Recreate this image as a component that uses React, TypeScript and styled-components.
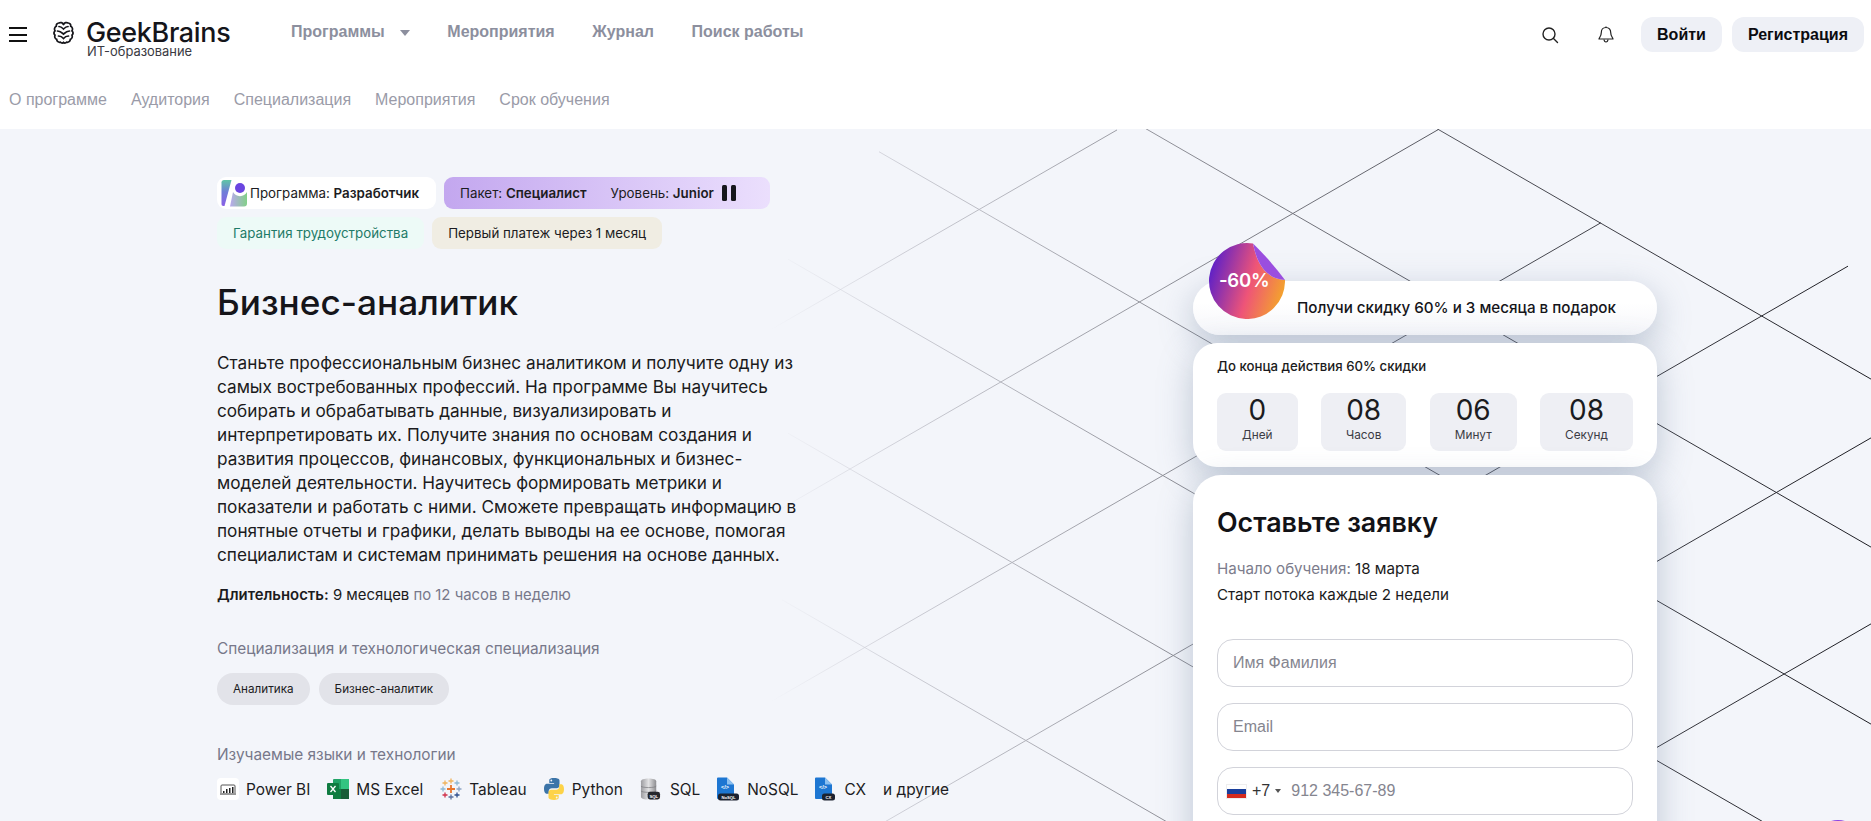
import React from "react";
import styled, { createGlobalStyle } from "styled-components";

const Global = createGlobalStyle`
  html, body { margin: 0; padding: 0; background: #fff; overflow: hidden; }
  * { box-sizing: border-box; }
  body { font-family: "Inter", "Noto Sans", sans-serif; color: #17171c; }
`;

const Page = styled.div`
  width: 100%;
  height: 821px;
  overflow: hidden;
  position: relative;
  display: flex;
  flex-direction: column;
`;

const TopBar = styled.header`
  flex: none;
  display: flex;
  align-items: flex-start;
  height: 66px;
  padding: 17px 7px 0 9px;
`;

const Burger = styled.div`
  width: 18px;
  margin-top: 10px;
  display: flex;
  flex-direction: column;
  gap: 4.5px;
  margin-right: 27px;
  span { display: block; height: 2px; background: #111; }
`;

const Brand = styled.div`
  display: flex;
  flex-direction: column;
  width: 237px;
  margin-top: 2px;
`;

const BrandRow = styled.div`
  display: flex;
  align-items: center;
  gap: 12px;
  height: 26px;
`;

const BrandName = styled.span`
  display: block;
  line-height: 22px;
  font-size: 26.9px;
  font-weight: 500;
  letter-spacing: -0.3px;
  color: #15151a;
`;

const BrandSub = styled.span`
  font-size: 12.9px;
  line-height: 16px;
  margin: -1px 0 0 33px;
  color: #3a3a42;
`;

const MainNav = styled.nav`
  display: flex;
  align-items: center;
  gap: 37.6px;
  height: 30px;
  font-family: "Liberation Sans", Arial, sans-serif;
  font-size: 16px;
  font-weight: 700;
  color: #8c8f9e;
`;

const NavItem = styled.span`
  display: flex;
  align-items: center;
  gap: 15px;
`;

const Caret = styled.i`
  width: 0;
  height: 0;
  border-left: 5px solid transparent;
  border-right: 5px solid transparent;
  border-top: 6px solid #8c8f9e;
  margin-top: 2px;
`;

const Actions = styled.div`
  margin-left: auto;
  display: flex;
  align-items: center;
  height: 35px;
`;

const IconSlot = styled.span`
  display: flex;
  width: 56px;
  padding-left: 5px;
  justify-content: center;
`;

const AuthButton = styled.button<{ $pad: number }>`
  height: 35px;
  border: 0;
  border-radius: 12px;
  background: #eef0f6;
  font-family: "Liberation Sans", Arial, sans-serif;
  font-weight: 700;
  font-size: 16px;
  color: #0c0c10;
  padding: 0 ${(p) => p.$pad}px;
  margin-left: 10px;
`;

const SubNav = styled.nav`
  flex: none;
  height: 63px;
  padding: 4px 0 0 9px;
  display: flex;
  align-items: center;
  gap: 24px;
  font-family: "Liberation Sans", Arial, sans-serif;
  font-size: 16px;
  color: #9a9ba8;
`;

const Hero = styled.main`
  flex: 1;
  min-height: 0;
  position: relative;
  background: #f3f5fa;
  display: flex;
  justify-content: space-between;
  padding: 0 214px 0 217px;
`;

const Lines = styled.svg`
  position: absolute;
  left: 0;
  top: 0;
`;

const LeftCol = styled.section`
  position: relative;
  width: 760px;
  padding-top: 48px;
`;

const ChipRow = styled.div`
  display: flex;
  gap: 8px;
  margin-bottom: 8px;
`;

const Chip = styled.div<{ $bg: string; $color?: string; $pad?: number }>`
  height: 32px;
  border-radius: 9px;
  background: ${(p) => p.$bg};
  color: ${(p) => p.$color || "#1c1c22"};
  display: flex;
  align-items: center;
  font-size: 13.35px;
  padding: 0 ${(p) => p.$pad ?? 16}px;
  b { font-weight: 600; }
`;

const ProgramChip = styled(Chip)`
  padding: 0 17px 0 4px;
  gap: 3px;
`;

const PackChip = styled(Chip)`
  gap: 24px;
  padding: 0 33px 0 16px;
`;

const LevelGroup = styled.span`
  display: flex;
  align-items: center;
  gap: 8px;
`;

const Title = styled.h1`
  font-size: 35.2px;
  line-height: 44px;
  font-weight: 500;
  margin: 31px 0 0;
  color: #15151a;
`;

const Lead = styled.p`
  font-size: 17.2px;
  line-height: 24px;
  margin: 27px 0 0;
  color: #1b1b20;
`;

const Duration = styled.p`
  font-size: 14.9px;
  line-height: 24px;
  margin: 16px 0 0;
  color: #1b1b20;
  b { font-weight: 600; }
  span { color: #77788a; }
`;

const Label = styled.h3<{ $top: number }>`
  font-size: 15.4px;
  line-height: 24px;
  font-weight: 400;
  color: #77788a;
  margin: ${(p) => p.$top}px 0 0;
`;

const Pills = styled.div`
  display: flex;
  gap: 9px;
  margin-top: 12px;
`;

const Pill = styled.span`
  height: 32px;
  border-radius: 16px;
  background: #e2e3e9;
  display: flex;
  align-items: center;
  padding: 0 16px;
  font-size: 11.7px;
  color: #1c1c22;
`;

const TechRow = styled.div`
  display: flex;
  align-items: center;
  gap: 17px;
  margin-top: 10px;
  height: 24px;
  white-space: nowrap;
`;

const Tech = styled.span<{ $gap?: number }>`
  display: flex;
  align-items: center;
  gap: ${(p) => p.$gap ?? 8}px;
  font-size: 15.4px;
  color: #1c1c22;
`;

const RightCol = styled.aside`
  position: relative;
  width: 464px;
  flex: none;
  padding-top: 152px;
  display: flex;
  flex-direction: column;
  gap: 8px;
`;

const PromoCard = styled.div`
  flex: none;
  position: relative;
  height: 54px;
  border-radius: 27px;
  background: linear-gradient(180deg, #fff 40%, #f5f6fa 100%);
  box-shadow: 0 10px 34px rgba(100, 120, 150, 0.38);
  display: flex;
  align-items: center;
  padding: 0 0 2px 104px;
  font-size: 15.2px;
  font-weight: 500;
  color: #15151a;
`;

const Sticker = styled.div`
  position: absolute;
  left: 16px;
  top: -38px;
  width: 76px;
  height: 76px;
`;

const StickerText = styled.span`
  position: absolute;
  left: 10px;
  top: 25px;
  color: #fff;
  font-size: 18.6px;
  line-height: 24px;
  font-weight: 600;
  letter-spacing: -0.3px;
`;

const TimerCard = styled.div`
  flex: none;
  position: relative;
  height: 124px;
  border-radius: 24px;
  background: #fff;
  box-shadow: 0 10px 34px rgba(100, 120, 150, 0.38);
  padding: 15px 24px 0;
`;

const TimerTitle = styled.div`
  font-size: 13.2px;
  line-height: 16px;
  font-weight: 500;
  color: #1b1b20;
`;

const TimerRow = styled.div`
  display: flex;
  justify-content: space-between;
  margin-top: 19px;
`;

const TimeBox = styled.div`
  height: 58px;
  padding: 1px 25px 0;
  border-radius: 9px;
  background: #eeeff4;
  display: flex;
  flex-direction: column;
  align-items: center;
`;

const TimeNum = styled.span`
  font-size: 28px;
  line-height: 32px;
  font-weight: 400;
  color: #1b1b20;
`;

const TimeLabel = styled.span`
  font-size: 11.8px;
  line-height: 16px;
  margin-top: 1px;
  color: #3b3b44;
`;

const FormCard = styled.form`
  flex: none;
  position: relative;
  height: 520px;
  border-radius: 28px;
  background: #fff;
  box-shadow: 0 10px 34px rgba(100, 120, 150, 0.38);
  padding: 29px 24px 0;
`;

const FormTitle = styled.h2`
  margin: 0;
  font-size: 26.8px;
  line-height: 36px;
  font-weight: 600;
  color: #121216;
`;

const FormInfo = styled.p`
  margin: 0;
  font-size: 15.15px;
  line-height: 26px;
  color: #1b1b20;
  span { color: #7c7c8c; }
`;

const InfoBlock = styled.div`
  margin-top: 16px;
  margin-bottom: 31px;
`;

const Field = styled.div`
  height: 48px;
  border: 1px solid #d2d3da;
  border-radius: 16px;
  background: #fff;
  margin-bottom: 16px;
  display: flex;
  align-items: center;
  padding: 0 0 0 8px;
`;

const FieldInput = styled.input<{ $pad?: number }>`
  flex: 1;
  min-width: 0;
  border: 0;
  outline: 0;
  background: transparent;
  padding-left: ${(p) => p.$pad ?? 7}px;
  font-family: "Liberation Sans", Arial, sans-serif;
  font-size: 16px;
  &::placeholder { color: #85858f; opacity: 1; }
`;

const Flag = styled.span`
  width: 21px;
  height: 15px;
  background: linear-gradient(#fff 0 33%, #1a3f9c 33% 66%, #d52b1e 66%);
  box-shadow: 0 0 0 1px #eee inset;
  flex: none;
`;

const DialCode = styled.span`
  font-family: "Liberation Sans", Arial, sans-serif;
  font-size: 16px;
  color: #333;
  margin-left: 5px;
`;

const DialCaret = styled.i`
  width: 0;
  height: 0;
  border-left: 3px solid transparent;
  border-right: 3px solid transparent;
  border-top: 4px solid #555;
  margin-left: 5px;
`;

const ChatBubble = styled.div`
  position: absolute;
  left: 1814px;
  top: 820px;
  width: 48px;
  height: 48px;
  border-radius: 50%;
  background: #8a3fe0;
`;

const S = 0.577;
const down = [
  { y: -210, a: 850 },
  { y: -42, a: 850 },
  { y: 135, a: 879 },
  { y: 295, a: 788 },
  { y: 469, a: 788 },
  { y: 639, a: 782 },
];
const up = [
  { y: 284, a: 770, b: 1117 },
  { y: 469, a: 770, b: 1439 },
  { y: 656, a: 770, b: 1601 },
  { y: 842, a: 770, b: 1848 },
  { y: 1027, a: 1100, b: 1871 },
  { y: 1213, a: 1300, b: 1871 },
];

const Pattern = () => (
  <Lines width="1871" height="692" viewBox="0 129 1871 692" fill="none">
    <defs>
      <linearGradient id="ln" gradientUnits="userSpaceOnUse" x1="770" y1="0" x2="1871" y2="0">
        <stop offset="0" stopColor="#d6d7df" stopOpacity="0" />
        <stop offset="0.12" stopColor="#cdced6" />
        <stop offset="0.38" stopColor="#8a8b93" />
        <stop offset="0.62" stopColor="#53545c" />
        <stop offset="1" stopColor="#1c1c22" />
      </linearGradient>
    </defs>
    {down.map((l) => (
      <path key={"d" + l.y} d={`M${l.a} ${l.y + (l.a - 850) * S}L1871 ${l.y + 1021 * S}`} stroke="url(#ln)" />
    ))}
    {up.map((l) => (
      <path key={"u" + l.y} d={`M${l.a} ${l.y - (l.a - 850) * S}L${l.b} ${l.y - (l.b - 850) * S}`} stroke="url(#ln)" />
    ))}
  </Lines>
);

const BrainLogo = () => (
  <svg width="21" height="23" viewBox="0 0 21 23" fill="none" stroke="#15151a" strokeWidth="1.7" strokeLinecap="round" style={{ marginLeft: -1 }}>
    <path d="M10.5 3.4C9.6 1.7 7.4 1 5.8 2 4 2.2 3 3.7 3.3 5.3 1.6 6.2 1 8.2 2 9.8c-1.2 1.3-1.2 3.2 0 4.4-.7 1.7.1 3.6 1.7 4.2.1 1.9 1.8 3.2 3.6 2.8 1 .9 2.3 1 3.2.3" />
    <path d="M10.5 3.4c.9-1.7 3.1-2.4 4.7-1.4 1.8.2 2.8 1.7 2.5 3.3 1.7.9 2.3 2.9 1.3 4.500 1.2 1.3 1.2 3.2 0 4.4.7 1.7-.1 3.6-1.7 4.2-.1 1.9-1.8 3.2-3.6 2.8-1 .9-2.3 1-3.2.3" />
    <path d="M6 5.5c2 0 3 1 4.500 2.500 1.500-1.500 2.500-2.500 4.500-2.500M4.500 10c2 0 3.500.8 6 3 2.500-2.200 4-3 6-3M5.500 15c2 0 3.500.6 5 2.500 1.500-1.900 3-2.500 5-2.500" />
  </svg>
);

const SearchIcon = () => (
  <svg width="18" height="18" viewBox="0 0 18 18" fill="none" stroke="#222" strokeWidth="1.4" strokeLinecap="round">
    <circle cx="8" cy="8" r="6" />
    <path d="M12.500 12.500L16.500 16.500" />
  </svg>
);

const BellIcon = () => (
  <svg width="16" height="18" viewBox="0 0 16 18" fill="none" stroke="#222" strokeWidth="1.2" strokeLinejoin="round">
    <path d="M8 1.500c-3 0-4.700 2.200-4.700 5 0 3.700-2 4.800-2.300 6.500h14c-.3-1.700-2.300-2.800-2.300-6.500 0-2.800-1.700-5-4.700-5z" />
    <path d="M6 13.500c.2 1.700 1 2.500 2 2.500s1.800-.8 2-2.500" />
    <path d="M8 .5v1" />
  </svg>
);

const ProgramLogo = () => (
  <svg width="26" height="28" viewBox="0 0 26 28">
    <defs>
      <linearGradient id="pl" x1="0" y1="0" x2="0" y2="1">
        <stop offset="0" stopColor="#5fc6a6" />
        <stop offset="0.45" stopColor="#6f7fd8" />
        <stop offset="1" stopColor="#8a5fe6" />
      </linearGradient>
      <linearGradient id="pr" x1="0" y1="0" x2="1" y2="0">
        <stop offset="0" stopColor="#b9a9ee" />
        <stop offset="1" stopColor="#82d088" />
      </linearGradient>
    </defs>
    <path d="M3 1h7.500L3.500 27H2.500C1 27 .5 26 .5 25V3.500C.5 2 1.500 1 3 1z" fill="url(#pl)" />
    <path d="M9 27.500L12 13A8 8 0 0 0 26 13V24.500a3 3 0 0 1-3 3z" fill="url(#pr)" />
    <circle cx="19" cy="9" r="5" fill="#6a45e0" />
  </svg>
);

const PauseIcon = () => (
  <svg width="15" height="16" viewBox="0 0 15 16" fill="#16161c">
    <rect x="0" width="5" height="16" rx="1.500" />
    <rect x="9" width="5" height="16" rx="1.500" />
  </svg>
);

const PowerBiIcon = () => (
  <svg width="22" height="22" viewBox="0 0 22 22">
    <rect width="22" height="22" rx="4" fill="#fff" />
    <path d="M4 15V8a1 1 0 0 1 1-1h12a1 1 0 0 1 1 1v7" fill="none" stroke="#555" strokeWidth="1" />
    <path d="M3 16h16" stroke="#333" strokeWidth="1" />
    <path d="M6 15v-2h1.500v2zM9 15v-4h1.500v4zM12 15v-5h1.500v5zM15 15V9h1.500v6z" fill="#222" />
  </svg>
);

const ExcelIcon = () => (
  <svg width="22" height="22" viewBox="0 0 22 22">
    <rect x="6" y="1" width="16" height="20" rx="1" fill="#21a366" />
    <rect x="6" y="11" width="16" height="10" fill="#107c41" />
    <rect x="14" y="1" width="8" height="10" fill="#33c481" />
    <rect x="14" y="11" width="8" height="10" fill="#185c37" />
    <rect x="0" y="5" width="12" height="12" rx="1" fill="#0f7b40" />
    <path d="M3.500 8l5 6M8.500 8l-5 6" stroke="#fff" strokeWidth="1.300" />
  </svg>
);

const Plus = ({ x, y, r, c, w = 1.3 }: { x: number; y: number; r: number; c: string; w?: number }) => (
  <path d={`M${x - r} ${y}H${x + r}M${x} ${y - r}V${y + r}`} stroke={c} strokeWidth={w} />
);

const TableauIcon = () => (
  <svg width="22" height="22" viewBox="0 0 22 22" fill="none">
    <Plus x={11} y={11} r={4} c="#e8762d" w={1.8} />
    <Plus x={11} y={3} r={2.5} c="#f0b35c" />
    <Plus x={11} y={19} r={2.5} c="#5b6f9e" />
    <Plus x={3} y={11} r={2.500} c="#8fb8d4" />
    <Plus x={19} y={11} r={2.500} c="#8fa4c4" />
    <Plus x={5} y={5} r={2.500} c="#f0b35c" />
    <Plus x={17} y={5} r={2.500} c="#8fb8d4" />
    <Plus x={5} y={17} r={2.500} c="#d1314b" />
    <Plus x={17} y={17} r={2.500} c="#2f4f8f" />
  </svg>
);

const PythonIcon = () => (
  <svg width="20" height="24" viewBox="2 0 20 24" preserveAspectRatio="none">
    <path d="M12 1C7 1 7.300 3.200 7.300 3.200v2.800h4.800v.7H5.400S2 6.300 2 11.700s3 5.100 3 5.100h1.800v-2.500s-.1-3 3-3h4.900s2.800 0 2.800-2.700V3.700S18 1 12 1zM9.300 2.600a.9.900 0 1 1 0 1.800.9.900 0 0 1 0-1.800z" fill="#3b74a8" />
    <path d="M12 23c5 0 4.700-2.200 4.700-2.200V18h-4.800v-.7h6.700s3.400.4 3.400-5-3-5.100-3-5.100h-1.800v2.500s.1 3-3 3H9.300s-2.800 0-2.800 2.700v4.900S6 23 12 23zm2.700-1.600a.9.900 0 1 1 0-1.800.9.900 0 0 1 0 1.800z" fill="#fdd348" />
  </svg>
);

const SqlIcon = () => (
  <svg width="21" height="24" viewBox="0 0 22 24">
    <defs>
      <linearGradient id="db" x1="0" x2="1" y1="0" y2="0">
        <stop offset="0" stopColor="#9c9ca0" />
        <stop offset="0.5" stopColor="#e2e2e4" />
        <stop offset="1" stopColor="#8c8c90" />
      </linearGradient>
    </defs>
    <path d="M1 4c0-2 3.500-3 8-3s8 1 8 3v16c0 2-3.500 3-8 3s-8-1-8-3z" fill="url(#db)" />
    <path d="M1 9c1 2 15 2 16 0M1 14c1 2 15 2 16 0" stroke="#77777b" fill="none" strokeWidth=".7" />
    <rect x="8" y="15" width="13" height="8" rx="2.500" fill="#24262c" />
    <text x="14.500" y="21" fontSize="4.500" fill="#fff" textAnchor="middle" fontFamily="Liberation Sans" fontWeight="700">SQL</text>
  </svg>
);

const CodeFile = ({ tag, wide }: { tag: string; wide?: boolean }) => (
  <svg width={wide ? 22 : 20} height="24" viewBox={`0 0 ${wide ? 22 : 20} 24`}>
    <path d="M0 1.500A1 1 0 0 1 1 .5h9l7 7v13.500a1 1 0 0 1-1 1H1a1 1 0 0 1-1-1z" fill="#1d76d2" />
    <path d="M10 .5l7 7h-7z" fill="#8cc0f0" />
    <text x="8" y="12" fontSize="5.500" fill="#fff" textAnchor="middle" fontFamily="Liberation Sans" fontWeight="700">&lt;/&gt;</text>
    <rect x={wide ? 1 : 7} y="16.500" width={wide ? 21 : 13} height="7" rx="2.500" fill="#1c2230" />
    <text x={wide ? 11.500 : 13.500} y="21.800" fontSize="4.200" fill="#fff" textAnchor="middle" fontFamily="Liberation Sans" fontWeight="700">{tag}</text>
  </svg>
);

const StickerArt = () => (
  <svg width="76" height="76" viewBox="0 0 76 76">
    <defs>
      <linearGradient id="st" x1="0" y1="0.35" x2="1" y2="0.65">
        <stop offset="0" stopColor="#5a1fc9" />
        <stop offset="0.55" stopColor="#ee5478" />
        <stop offset="1" stopColor="#f4a52a" />
      </linearGradient>
    </defs>
    <path d="M44 .5A38 38 0 1 0 76 37C58 36 48 22 44 .5z" fill="url(#st)" />
    <path d="M44 .5C48 22 58 36 76 37 66 24 56 12 44 .5z" fill="#9a4edf" />
  </svg>
);

const techs: { name: string; icon: React.ReactNode; gap: number }[] = [
  { name: "Power BI", icon: <PowerBiIcon />, gap: 7 },
  { name: "MS Excel", icon: <ExcelIcon />, gap: 7 },
  { name: "Tableau", icon: <TableauIcon />, gap: 7 },
  { name: "Python", icon: <PythonIcon />, gap: 8 },
  { name: "SQL", icon: <SqlIcon />, gap: 9 },
  { name: "NoSQL", icon: <CodeFile tag="NoSQL" wide />, gap: 8 },
  { name: "CX", icon: <CodeFile tag="CX" />, gap: 9 },
];

const timer = [
  ["0", "Дней"],
  ["08", "Часов"],
  ["06", "Минут"],
  ["08", "Секунд"],
];

export default function App() {
  return (
    <Page>
      <Global />
      <TopBar>
        <Burger>
          <span />
          <span />
          <span />
        </Burger>
        <Brand>
          <BrandRow>
            <BrainLogo />
            <BrandName>GeekBrains</BrandName>
          </BrandRow>
          <BrandSub>ИТ-образование</BrandSub>
        </Brand>
        <MainNav>
          <NavItem>
            Программы <Caret />
          </NavItem>
          <NavItem>Мероприятия</NavItem>
          <NavItem>Журнал</NavItem>
          <NavItem>Поиск работы</NavItem>
        </MainNav>
        <Actions>
          <IconSlot>
            <SearchIcon />
          </IconSlot>
          <IconSlot>
            <BellIcon />
          </IconSlot>
          <AuthButton $pad={16}>Войти</AuthButton>
          <AuthButton $pad={16}>Регистрация</AuthButton>
        </Actions>
      </TopBar>
      <SubNav>
        <span>О программе</span>
        <span>Аудитория</span>
        <span>Специализация</span>
        <span>Мероприятия</span>
        <span>Срок обучения</span>
      </SubNav>
      <Hero>
        <Pattern />
        <LeftCol>
          <ChipRow>
            <ProgramChip $bg="#fff">
              <ProgramLogo />
              <span>
                Программа: <b>Разработчик</b>
              </span>
            </ProgramChip>
            <PackChip $bg="linear-gradient(90deg, #c3a7ef 0%, #ebdffd 100%)">
              <span>
                Пакет: <b>Специалист</b>
              </span>
              <LevelGroup>
                <span>
                  Уровень: <b>Junior</b>
                </span>
                <PauseIcon />
              </LevelGroup>
            </PackChip>
          </ChipRow>
          <ChipRow>
            <Chip $bg="#edfaf7" $color="#1f7a68">
              Гарантия трудоустройства
            </Chip>
            <Chip $bg="#f0ede3">Первый платеж через 1 месяц</Chip>
          </ChipRow>
          <Title>Бизнес-аналитик</Title>
          <Lead>
            Станьте профессиональным бизнес аналитиком и получите одну из
            <br />
            самых востребованных профессий. На программе Вы научитесь
            <br />
            собирать и обрабатывать данные, визуализировать и
            <br />
            интерпретировать их. Получите знания по основам создания и
            <br />
            развития процессов, финансовых, функциональных и бизнес-
            <br />
            моделей деятельности. Научитесь формировать метрики и
            <br />
            показатели и работать с ними. Сможете превращать информацию в
            <br />
            понятные отчеты и графики, делать выводы на ее основе, помогая
            <br />
            специалистам и системам принимать решения на основе данных.
          </Lead>
          <Duration>
            <b>Длительность:</b> 9 месяцев <span>по 12 часов в неделю</span>
          </Duration>
          <Label $top={30}>Специализация и технологическая специализация</Label>
          <Pills>
            <Pill>Аналитика</Pill>
            <Pill>Бизнес-аналитик</Pill>
          </Pills>
          <Label $top={38}>Изучаемые языки и технологии</Label>
          <TechRow>
            {techs.map((t) => (
              <Tech key={t.name} $gap={t.gap}>
                {t.icon}
                {t.name}
              </Tech>
            ))}
            <Tech>и другие</Tech>
          </TechRow>
        </LeftCol>
        <RightCol>
          <PromoCard>
            <Sticker>
              <StickerArt />
              <StickerText>-60%</StickerText>
            </Sticker>
            Получи скидку 60% и 3 месяца в подарок
          </PromoCard>
          <TimerCard>
            <TimerTitle>До конца действия 60% скидки</TimerTitle>
            <TimerRow>
              {timer.map(([n, l]) => (
                <TimeBox key={l}>
                  <TimeNum>{n}</TimeNum>
                  <TimeLabel>{l}</TimeLabel>
                </TimeBox>
              ))}
            </TimerRow>
          </TimerCard>
          <FormCard>
            <FormTitle>Оставьте заявку</FormTitle>
            <InfoBlock>
              <FormInfo>
                <span>Начало обучения:</span> 18 марта
              </FormInfo>
              <FormInfo>Старт потока каждые 2 недели</FormInfo>
            </InfoBlock>
            <Field>
              <FieldInput placeholder="Имя Фамилия" />
            </Field>
            <Field>
              <FieldInput placeholder="Email" />
            </Field>
            <Field>
              <Flag />
              <DialCode>+7</DialCode>
              <DialCaret />
              <FieldInput $pad={10} placeholder="912 345-67-89" />
            </Field>
          </FormCard>
        </RightCol>
      </Hero>
      <ChatBubble />
    </Page>
  );
}
